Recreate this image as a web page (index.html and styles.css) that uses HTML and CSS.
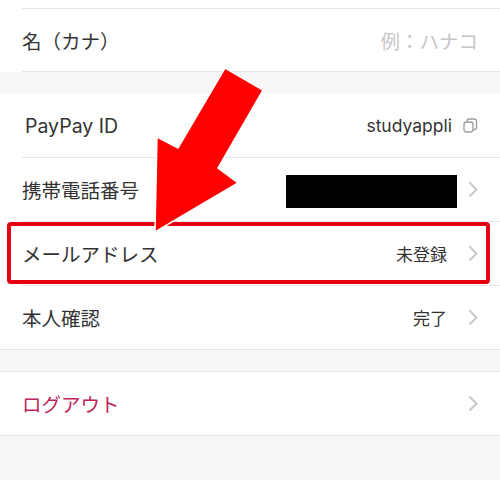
FILE: index.html
```html
<!DOCTYPE html>
<html lang="ja">
<head>
    <meta charset="UTF-8">
    <meta name="viewport" content="width=device-width, initial-scale=1.0">
    <title>アカウント設定</title>
    <link rel="stylesheet" href="styles.css">
</head>
<body>
    <div class="page">
        <section class="group first">
            <div class="row">
                <span class="label">名（カナ）</span>
                <span class="placeholder">例：ハナコ</span>
            </div>
        </section>

        <section class="group">
            <div class="row">
                <span class="label latin">PayPay ID</span>
                <span class="value latin">studyappli</span>
                <svg class="copy" width="15" height="15" viewBox="0 0 15 15">
                    <rect x="1" y="4" width="9" height="10" rx="2.5" fill="#fff" stroke="#9a9a9e" stroke-width="1.3"/>
                    <path d="M4 3.5 V3 a2 2 0 0 1 2-2 h5.5 a2 2 0 0 1 2 2 v6.5 a2 2 0 0 1 -2 2 H10.5" fill="none" stroke="#9a9a9e" stroke-width="1.3"/>
                </svg>
            </div>
            <div class="row">
                <span class="label">携帯電話番号</span>
                <span class="masked"></span>
                <svg class="chevron" width="10" height="17" viewBox="0 0 10 17"><path d="M1.5 1.5 L8.5 8.5 L1.5 15.5" fill="none" stroke="#c7c7cc" stroke-width="2"/></svg>
            </div>
            <div class="row">
                <span class="label">メールアドレス</span>
                <span class="value">未登録</span>
                <svg class="chevron" width="10" height="17" viewBox="0 0 10 17"><path d="M1.5 1.5 L8.5 8.5 L1.5 15.5" fill="none" stroke="#c7c7cc" stroke-width="2"/></svg>
                <div class="highlight"></div>
            </div>
            <div class="row full">
                <span class="label">本人確認</span>
                <span class="value">完了</span>
                <svg class="chevron" width="10" height="17" viewBox="0 0 10 17"><path d="M1.5 1.5 L8.5 8.5 L1.5 15.5" fill="none" stroke="#c7c7cc" stroke-width="2"/></svg>
            </div>
        </section>

        <section class="group last">
            <div class="row full">
                <span class="label logout">ログアウト</span>
                <svg class="chevron" width="10" height="17" viewBox="0 0 10 17"><path d="M1.5 1.5 L8.5 8.5 L1.5 15.5" fill="none" stroke="#c7c7cc" stroke-width="2"/></svg>
            </div>
        </section>

        <svg class="arrow" width="500" height="480" viewBox="0 0 500 480">
            <polygon points="225,68 263,90 218,168 238,183 155,232 157,137 178,148" fill="#ff0000" stroke="#fff" stroke-width="1.5" stroke-linejoin="miter"/>
        </svg>
    </div>
</body>
</html>
```

FILE: styles.css
```css
* {
    margin: 0;
    padding: 0;
    box-sizing: border-box;
}

body {
    background: #f7f7f9;
    font-family: 'Noto Sans CJK JP', sans-serif;
    color: #333;
}

.page {
    position: relative;
    width: 500px;
    height: 480px;
    overflow: hidden;
}

.group {
    background: #fff;
    margin-bottom: 21px;
}

.group.first {
    padding-top: 8px;
    margin-bottom: 22px;
}

.group.first .row {
    border-top: 1px solid #e6e6e9;
    height: 64px;
}

.group.last {
    border-top: 1px solid #e6e6e9;
}

.row {
    position: relative;
    display: flex;
    align-items: center;
    height: 64px;
    margin-left: 22px;
    padding-right: 22px;
    border-bottom: 1px solid #e6e6e9;
}

.row.full {
    margin-left: 0;
    padding-left: 22px;
}

.label {
    font-size: 19.5px;
    flex: 1;
}

.latin {
    font-family: 'Inter', 'Noto Sans CJK JP', sans-serif;
}

.label.latin {
    font-size: 19.5px;
    padding-left: 3px;
}

.placeholder {
    font-size: 19.5px;
    color: #c6c6c9;
}

.value {
    font-size: 17px;
    color: #333;
    margin-right: 21px;
}

.value.latin {
    font-size: 17.5px;
    margin-right: 11px;
}

.masked {
    width: 171px;
    height: 33px;
    background: #000;
    margin-right: 11px;
    margin-top: 3px;
}

.chevron {
    flex-shrink: 0;
}

.logout {
    color: #c0245a;
}

.highlight {
    position: absolute;
    top: 0;
    left: -15px;
    right: 10px;
    height: 62px;
    border: 4px solid #e50012;
    border-radius: 4px;
}

.arrow {
    position: absolute;
    top: 0;
    left: 0;
    pointer-events: none;
}
```
